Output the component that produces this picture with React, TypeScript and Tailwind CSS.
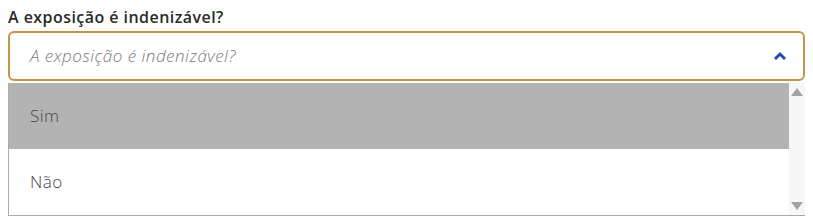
import React from 'react';

export default function App() {
  return (
    <div className="w-[813px] h-[217px] bg-white overflow-hidden px-2 pt-[6px] font-['Open_Sans',sans-serif]">
      <label className="block text-[16px] font-semibold leading-[22px] text-[#2a2a2a] tracking-[0.45px]">
        A exposição é indenizável?
      </label>
      <div className="mt-[3px] h-[50px] w-full rounded-[6px] border-2 border-[#c4944a] flex items-center justify-between pl-[20px] pr-[16px]">
        <span className="italic text-[17px] text-[#7a7a7a] font-light tracking-[0.5px]">A exposição é indenizável?</span>
        <svg width="14" height="10" viewBox="0 0 14 10" className="text-[#2348b4]">
          <path d="M2 8 L7 3 L12 8" fill="none" stroke="currentColor" strokeWidth="3" />
        </svg>
      </div>
      <div className="mt-[2px] flex h-[133px] w-full border-l border-b border-[#aaa]">
        <div className="flex-1 flex flex-col">
          <div className="h-[66px] bg-[#b3b3b3] flex items-center pl-[21px] text-[17px] text-[#444] font-light tracking-[0.5px]">Sim</div>
          <div className="h-[66px] bg-white flex items-center pl-[21px] text-[17px] text-[#444] font-light tracking-[0.5px]">Não</div>
        </div>
        <div className="w-[16px] bg-[#f7f7f7] flex flex-col items-center justify-between py-[5px]">
          <svg width="12" height="8" viewBox="0 0 12 8"><path d="M6 0 L12 8 L0 8 Z" fill="#a3a3a3" /></svg>
          <svg width="12" height="8" viewBox="0 0 12 8"><path d="M0 0 L12 0 L6 8 Z" fill="#a3a3a3" /></svg>
        </div>
      </div>
    </div>
  );
}
